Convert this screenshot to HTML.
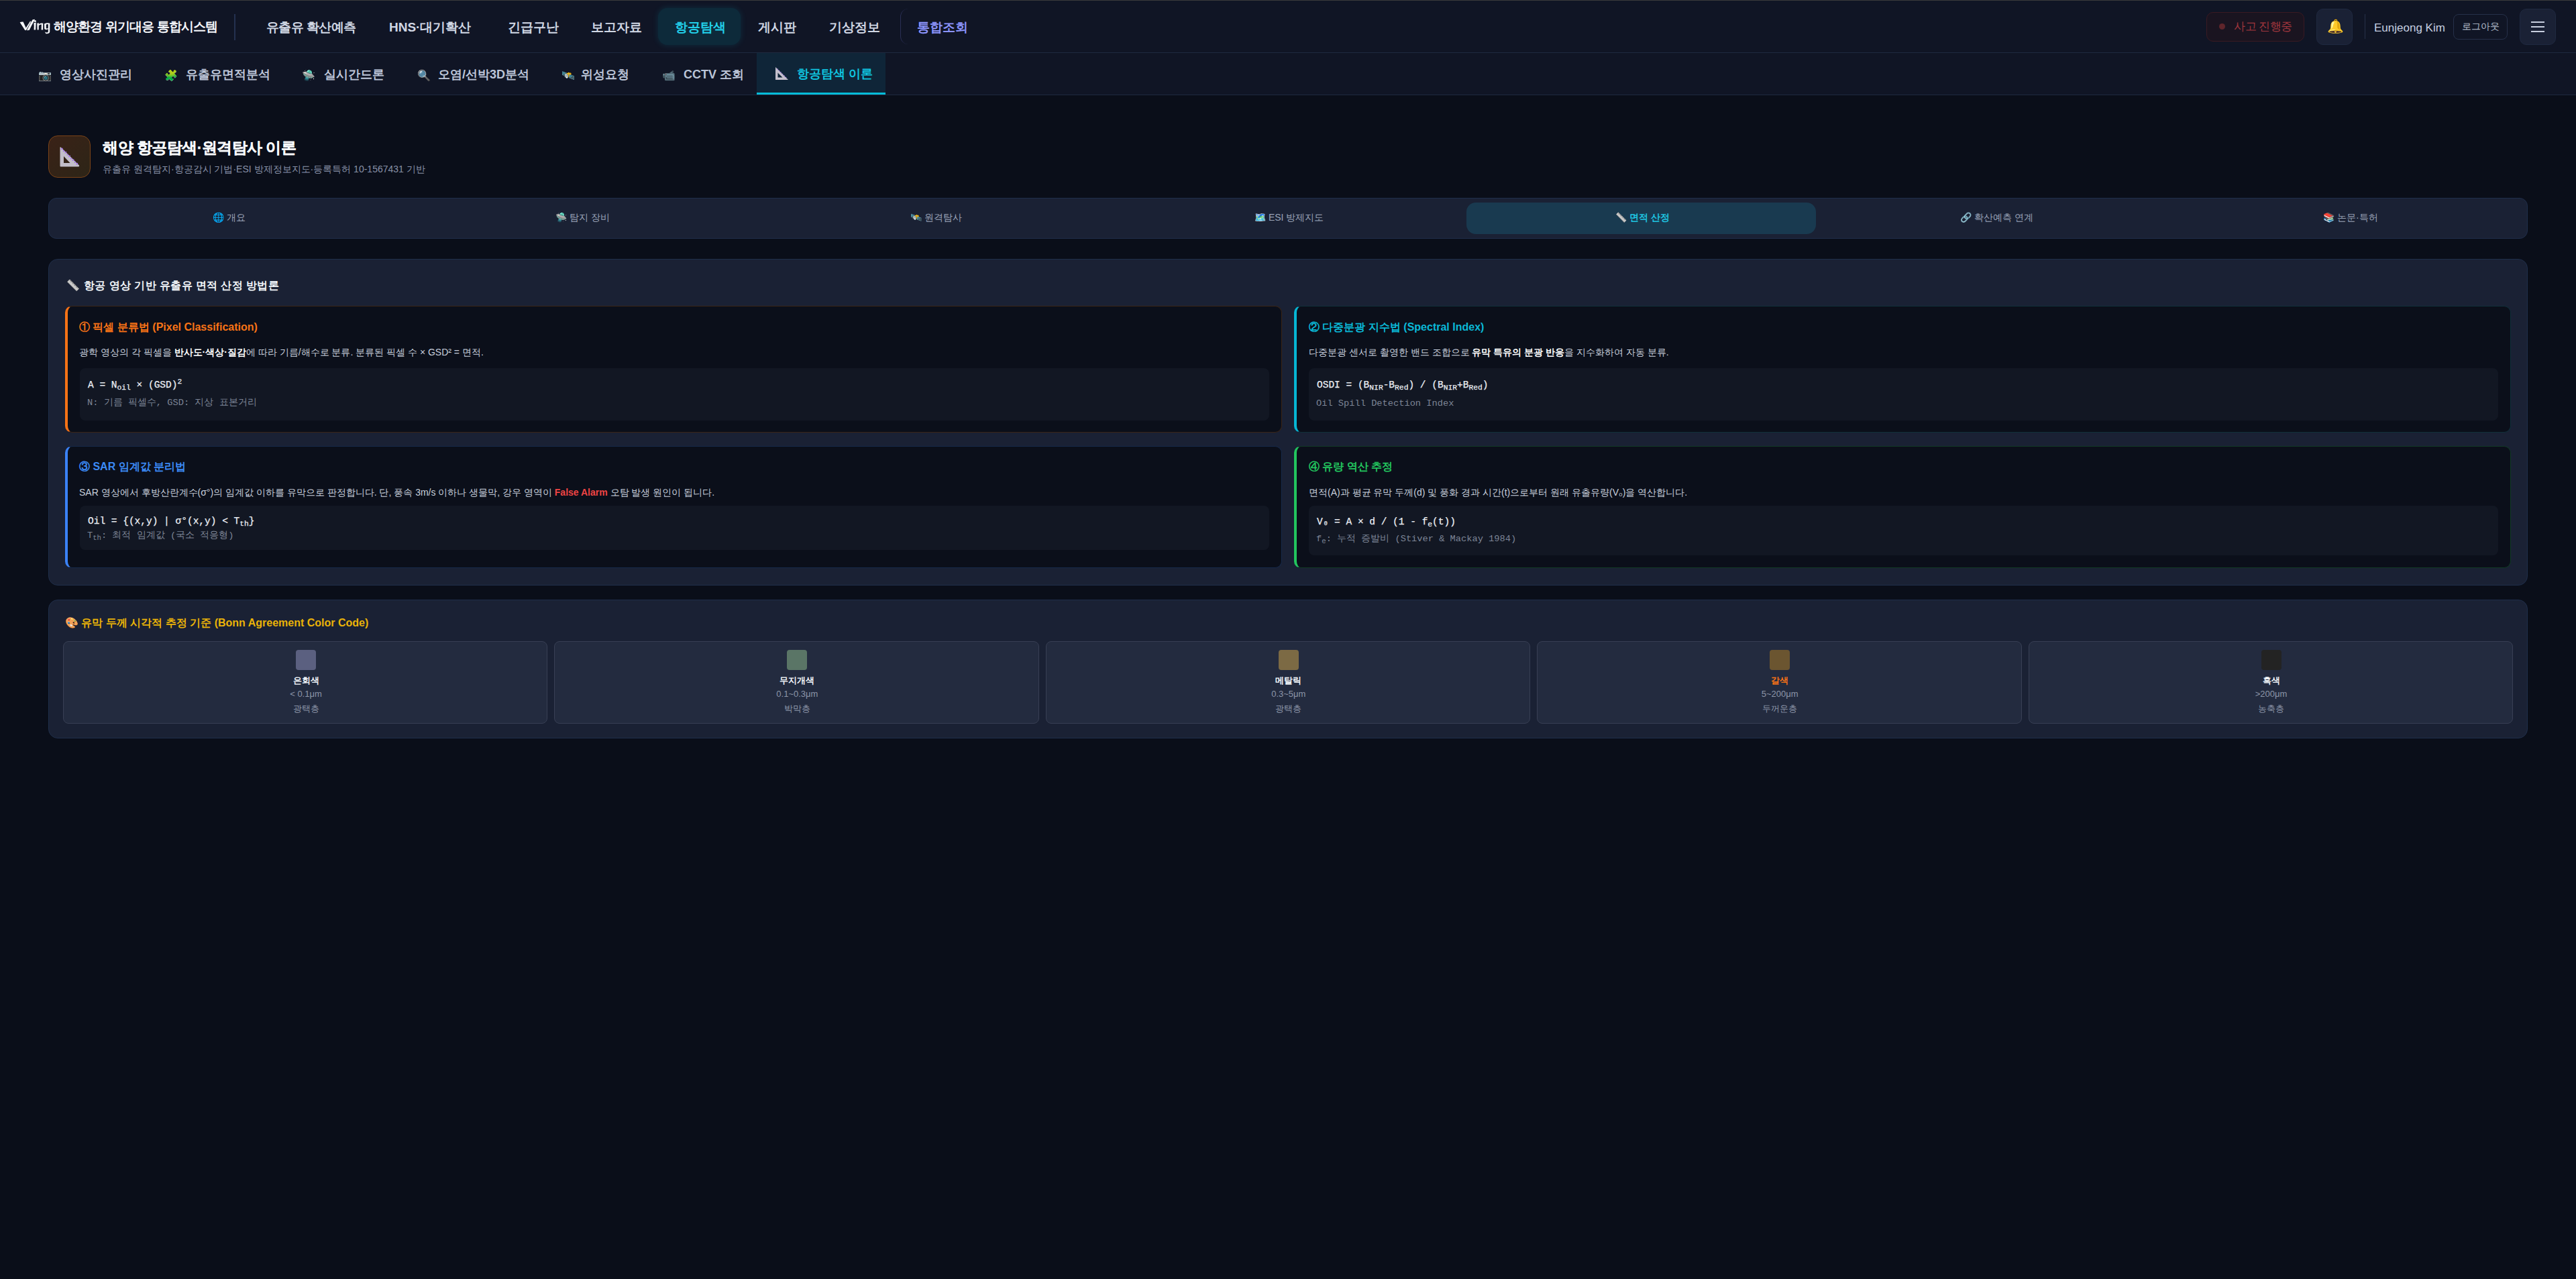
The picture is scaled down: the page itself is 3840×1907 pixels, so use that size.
<!DOCTYPE html>
<html lang="ko"><head><meta charset="utf-8">
<style>
*{box-sizing:border-box;margin:0;padding:0}
html,body{width:3840px;height:1907px;overflow:hidden;background:#0a0e19;font-family:"Liberation Sans",sans-serif;color:#e2e8f0}
.a{position:absolute;white-space:nowrap;line-height:1}
.b{position:absolute}
.topline{position:absolute;left:0;top:0;width:3840px;height:1px;background:#3b3b3b}
.nav{position:absolute;left:0;top:1px;width:3840px;height:78px;background:#101525;border-bottom:1px solid #1e2940}
.sub{position:absolute;left:0;top:79px;width:3840px;height:63px;background:#101525;border-bottom:1px solid #1e2940}
.logo{left:80px;top:29px;font-size:19px;font-weight:700;color:#f4f6fa;letter-spacing:-0.9px}
.vsep{position:absolute;left:349px;top:20px;width:2px;height:39px;background:#243150}
.ni{font-size:19px;font-weight:700;color:#d0d7e4;top:30px}
.act{position:absolute;left:981px;top:11px;width:123px;height:55px;border-radius:14px;background:#0d2a3a;box-shadow:0 0 10px rgba(6,182,212,.16)}
.sbox{position:absolute;left:1342px;top:12px;width:40px;height:53px;border-left:1px solid #2a2f55;border-radius:12px 0 0 12px}
.si{font-size:18px;font-weight:700;color:#bcc5d8;top:23px}
.sic{font-size:16px;top:26px}
.sact{position:absolute;left:1128px;top:0;width:192px;height:62px;background:#0f2538;border-bottom:3px solid #06bcd8}
/* header */
.hicon{position:absolute;left:72px;top:202px;width:63px;height:63px;border-radius:14px;border:1.5px solid #7a4318;background:linear-gradient(135deg,#3a2217,#2d2517)}
.htitle{left:153px;top:210px;font-size:22.5px;font-weight:700;color:#f8fafc;-webkit-text-stroke:.3px #f8fafc;letter-spacing:-.5px}
.hsub{left:153px;top:245px;font-size:14px;color:#8891a7}
/* tabs */
.tabs{position:absolute;left:72px;top:295px;width:3696px;height:61px;border-radius:12px;background:#1a2134;border:1px solid #1f2e4a}
.tab{position:absolute;top:6px;height:47px;width:521px;border-radius:14px}
.tab.on{background:#193a50}
.tt{font-size:14px;color:#9aa4b8;top:317px}
/* panel */
.panel{position:absolute;left:72px;border-radius:14px;background:#1a2134;border:1px solid #1f2e4a}
.ptitle{font-size:16px;font-weight:700;color:#f1f5f9}
.gr{filter:grayscale(1) brightness(.95)}
.card{position:absolute;border-radius:10px;background:#0b0f1a;border:1px solid}
.ch{font-size:16px;font-weight:700}
.cp{font-size:14px;color:#c8cfdd}
.cp b{color:#ffffff}
.code{position:absolute;border-radius:8px;background:#121723}
.mono{font-family:"Liberation Mono",monospace}
.l1{font-size:14.5px;color:#eceff4;-webkit-text-stroke:.25px #eceff4}
sub{font-size:.78em;vertical-align:-.25em;line-height:0}
sup{font-size:.78em;vertical-align:.5em;line-height:0}
.l2{font-size:13.7px;color:#7d8596}
.item{position:absolute;top:956px;width:722.4px;height:123px;border-radius:8px;background:#232b3f;border:1px solid #383f54}
.sw{position:absolute;left:346px;top:12px;width:30px;height:30px;border-radius:4px}
.in{font-size:13px;font-weight:700;color:#f1f5f9;width:722px;text-align:center;left:0;top:51px}
.is{font-size:13px;color:#8d96a9;width:722px;text-align:center;left:0;top:71px}
.id{font-size:13px;color:#8d96a9;width:722px;text-align:center;left:0;top:93px}
</style></head><body>
<div class="topline"></div>
<div class="nav">
  <svg class="b" style="left:24px;top:19px" width="56" height="34" viewBox="24 20 56 34">
    <g fill="#f6f8fb">
      <path d="M29.6 33.2 Q32 32.2 34.6 32.6 L39.6 43.6 L37.4 45.3 Z"/>
      <path d="M36.8 44.6 L45 31.4 L46.3 32.2 L38.8 45.3 Z"/>
      <path d="M39.9 45.3 L43.6 45.1 Q47.5 37 52.2 28.8 L48.6 29.3 Q44 37 39.9 45.3 Z"/>
      <path d="M50.4 34.2 L53.7 33.4 L53.1 44.5 L50.6 44.5 Q51 39 50.4 34.2 Z"/>
      <circle cx="52.4" cy="31.5" r="1.5"/>
      <path d="M55.3 34.8 L57.9 34.3 L57.7 44.5 L55.6 44.5 Z"/>
      <path d="M57.6 36.2 Q60.5 33.6 64.3 34.8 L64.1 44.5 L61.6 44.5 L61.8 36.6 Q59.6 36.2 57.7 38.2 Z"/>
      <path d="M66 35.4 Q70.5 33.2 74.4 34.8 L74.2 47.6 Q73.6 50.8 68.4 50.2 L66.8 47.6 Q70.6 49.6 71.8 47.6 L71.8 43.2 Q67.6 45.2 66.2 43 Z"/>
    </g>
    <path d="M68.8 36.4 L71.8 36.1 L71.8 42.2 L68.8 42.6 Z" fill="#101525"/>
  </svg>
  <div class="a logo">해양환경 위기대응 통합시스템</div>
  <div class="vsep"></div>
  <div class="act"></div>
  <div class="a ni" style="left:397px;letter-spacing:-0.6px">유출유 확산예측</div>
  <div class="a ni" style="left:580px">HNS·대기확산</div>
  <div class="a ni" style="left:757px">긴급구난</div>
  <div class="a ni" style="left:881px">보고자료</div>
  <div class="a ni" style="left:1006px;color:#22d0ea">항공탐색</div>
  <div class="a ni" style="left:1130px">게시판</div>
  <div class="a ni" style="left:1236px">기상정보</div>
  <div class="sbox"></div>
  <div class="a ni" style="left:1367px;color:#8b93fb">통합조회</div>
  <!-- right -->
  <div class="b" style="left:3289px;top:17px;width:146px;height:44px;border-radius:10px;border:1px solid #3a1a22;background:#1a1420"></div>
  <div class="b" style="left:3308px;top:34px;width:9px;height:9px;border-radius:50%;background:#5f252b"></div>
  <div class="a" style="left:3330px;top:30px;font-size:17px;color:#a0363d;letter-spacing:-0.5px">사고 진행중</div>
  <div class="b" style="left:3453px;top:12px;width:54px;height:54px;border-radius:10px;border:1px solid #1f2940;background:#1a2135"></div>
  <div class="a" style="left:3469px;top:28px;font-size:20px">🔔</div>
  <div class="b" style="left:3525px;top:20px;width:1px;height:37px;background:#263049"></div>
  <div class="a" style="left:3539px;top:32px;font-size:17px;color:#c6cfe0">Eunjeong Kim</div>
  <div class="b" style="left:3657px;top:20px;width:81px;height:38px;border-radius:8px;border:1px solid #263049"></div>
  <div class="a" style="left:3670px;top:31px;font-size:14px;color:#b9c1d1">로그아웃</div>
  <div class="b" style="left:3756px;top:12px;width:54px;height:54px;border-radius:10px;border:1px solid #1f2940;background:#1a2135"></div>
  <div class="b" style="left:3773px;top:31px;width:20px;height:2px;background:#c7cede"></div>
  <div class="b" style="left:3773px;top:38px;width:20px;height:2px;background:#c7cede"></div>
  <div class="b" style="left:3773px;top:45px;width:20px;height:2px;background:#c7cede"></div>
</div>
<div class="sub">
  <div class="sact"></div>
  <div class="a sic" style="left:57px">📷</div><div class="a si" style="left:89px">영상사진관리</div>
  <div class="a sic" style="left:245px">🧩</div><div class="a si" style="left:277px">유출유면적분석</div>
  <div class="a sic" style="left:450px">🛸</div><div class="a si" style="left:483px">실시간드론</div>
  <div class="a sic" style="left:622px">🔍</div><div class="a si" style="left:653px">오염/선박3D분석</div>
  <div class="a sic" style="left:837px">🛰️</div><div class="a si" style="left:866px">위성요청</div>
  <div class="a sic" style="left:987px">📹</div><div class="a si" style="left:1019px">CCTV 조회</div>
  <svg class="b" style="left:1155px;top:20px" width="21" height="21" viewBox="0 0 21 21">
    <path d="M1 1 L20 20 L1 20 Z M4.5 9.5 L4.5 16.5 L11.5 16.5 Z" fill="#c4c0cc" fill-rule="evenodd"/>
    <g fill="#a77ef0"><circle cx="4" cy="4" r=".8"/><circle cx="6.5" cy="6.5" r=".8"/><circle cx="9" cy="9" r=".8"/><circle cx="11.5" cy="11.5" r=".8"/><circle cx="14" cy="14" r=".8"/><circle cx="16.5" cy="16.5" r=".8"/></g>
  </svg>
  <div class="a si" style="left:1188px;color:#0fc3df;top:22px">항공탐색 이론</div>
</div>

<!-- header -->
<div class="hicon"></div>
<svg class="b" style="left:88px;top:218px" width="32" height="32" viewBox="0 0 32 32">
  <path d="M1.5 2 Q1.5 0.8 2.6 1.6 L30 28.4 Q30.8 30.5 29 30.5 L2.5 30.5 Q1.5 30.5 1.5 29.5 Z M7 15 L7 25 L16.5 25 Z" fill="#c2bec9" fill-rule="evenodd"/>
  <g stroke="#a36ff0" stroke-width="1.6" stroke-linecap="round">
    <path d="M3.6 4.5 L5 3.4"/><path d="M6.6 7.4 L7.4 6.6"/><path d="M9.2 10 L10.6 8.8"/><path d="M12.2 13 L13 12.2"/><path d="M14.8 15.6 L16.2 14.4"/><path d="M17.8 18.6 L18.6 17.8"/><path d="M20.4 21.2 L21.8 20"/><path d="M23.4 24.2 L24.2 23.4"/><path d="M26 26.8 L27.4 25.6"/>
  </g>
</svg>
<div class="a htitle">해양 항공탐색·원격탐사 이론</div>
<div class="a hsub">유출유 원격탐지·항공감시 기법·ESI 방제정보지도·등록특허 10-1567431 기반</div>

<!-- tabs -->
<div class="tabs">
  <div class="tab on" style="left:2113px"></div>
</div>
<div class="a tt" style="left:317px">🌐 개요</div>
<div class="a tt" style="left:828px">🛸 탐지 장비</div>
<div class="a tt" style="left:1357px">🛰️ 원격탐사</div>
<div class="a tt" style="left:1870px">🗺️ ESI 방제지도</div>
<div class="a tt" style="left:2408px;color:#1ec4e0;font-weight:700"><span class="gr">📏</span> 면적 산정</div>
<div class="a tt" style="left:2922px">🔗 확산예측 연계</div>
<div class="a tt" style="left:3463px">📚 논문·특허</div>

<!-- main panel -->
<div class="panel" style="top:386px;width:3696px;height:487px"></div>
<div class="a ptitle" style="left:99px;top:417px"><span class="gr">📏</span><span style="margin-left:6px;font-size:16.4px;letter-spacing:.35px">항공 영상 기반 유출유 면적 산정 방법론</span></div>

<div class="card" style="left:97px;top:456px;width:1814px;height:189px;border-color:#3a2516;border-left:4px solid #f97316"></div>
<div class="a ch" style="left:118px;top:480px;color:#f97316">① 픽셀 분류법 (Pixel Classification)</div>
<div class="a cp" style="left:118px;top:518px">광학 영상의 각 픽셀을 <b>반사도·색상·질감</b>에 따라 기름/해수로 분류. 분류된 픽셀 수 × GSD² = 면적.</div>
<div class="code" style="left:119px;top:549px;width:1773px;height:78px"></div>
<div class="a mono l1" style="left:131px;top:567px">A = N<sub>oil</sub> × (GSD)<sup>2</sup></div>
<div class="a mono l2" style="left:130px;top:594px">N: 기름 픽셀수, GSD: 지상 표본거리</div>

<div class="card" style="left:1929px;top:456px;width:1814px;height:189px;border-color:#10303a;border-left:4px solid #06b6d4"></div>
<div class="a ch" style="left:1951px;top:480px;color:#0ab8d6">② 다중분광 지수법 (Spectral Index)</div>
<div class="a cp" style="left:1951px;top:518px">다중분광 센서로 촬영한 밴드 조합으로 <b>유막 특유의 분광 반응</b>을 지수화하여 자동 분류.</div>
<div class="code" style="left:1951px;top:549px;width:1773px;height:78px"></div>
<div class="a mono l1" style="left:1963px;top:567px">OSDI = (B<sub>NIR</sub>-B<sub>Red</sub>) / (B<sub>NIR</sub>+B<sub>Red</sub>)</div>
<div class="a mono l2" style="left:1962px;top:595px">Oil Spill Detection Index</div>

<div class="card" style="left:97px;top:665px;width:1814px;height:182px;border-color:#172a4a;border-left:4px solid #3b82f6"></div>
<div class="a ch" style="left:118px;top:688px;color:#3b8af6">③ SAR 임계값 분리법</div>
<div class="a cp" style="left:118px;top:727px">SAR 영상에서 후방산란계수(σ°)의 임계값 이하를 유막으로 판정합니다. 단, 풍속 3m/s 이하나 생물막, 강우 영역이 <b style="color:#ef4444">False Alarm</b> 오탐 발생 원인이 됩니다.</div>
<div class="code" style="left:119px;top:754px;width:1773px;height:66px"></div>
<div class="a mono l1" style="left:131px;top:770px">Oil = {(x,y) | σ°(x,y) &lt; T<sub>th</sub>}</div>
<div class="a mono l2" style="left:130px;top:792px">T<sub>th</sub>: 최적 임계값 (국소 적응형)</div>

<div class="card" style="left:1929px;top:665px;width:1814px;height:182px;border-color:#123a26;border-left:4px solid #22c55e"></div>
<div class="a ch" style="left:1951px;top:688px;color:#22c55e">④ 유량 역산 추정</div>
<div class="a cp" style="left:1951px;top:727px">면적(A)과 평균 유막 두께(d) 및 풍화 경과 시간(t)으로부터 원래 유출유량(V₀)을 역산합니다.</div>
<div class="code" style="left:1951px;top:754px;width:1773px;height:74px"></div>
<div class="a mono l1" style="left:1963px;top:771px">V₀ = A × d / (1 - f<sub>e</sub>(t))</div>
<div class="a mono l2" style="left:1962px;top:797px">f<sub>e</sub>: 누적 증발비 (Stiver &amp; Mackay 1984)</div>

<!-- bonn panel -->
<div class="panel" style="top:894px;width:3696px;height:207px"></div>
<div class="a ptitle" style="left:97px;top:921px;color:#eab308">🎨 유막 두께 시각적 추정 기준 (Bonn Agreement Color Code)</div>
<div class="item" style="left:94px"><div class="sw" style="background:#5b6080"></div><div class="a in">은회색</div><div class="a is">&lt; 0.1μm</div><div class="a id">광택층</div></div>
<div class="item" style="left:826.4px"><div class="sw" style="background:#5a7566"></div><div class="a in">무지개색</div><div class="a is">0.1~0.3μm</div><div class="a id">박막층</div></div>
<div class="item" style="left:1558.8px"><div class="sw" style="background:#7c6a44"></div><div class="a in">메탈릭</div><div class="a is">0.3~5μm</div><div class="a id">광택층</div></div>
<div class="item" style="left:2291.2px"><div class="sw" style="background:#6b5530"></div><div class="a in" style="color:#f97316">갈색</div><div class="a is">5~200μm</div><div class="a id">두꺼운층</div></div>
<div class="item" style="left:3023.6px"><div class="sw" style="background:#232323"></div><div class="a in">흑색</div><div class="a is">&gt;200μm</div><div class="a id">농축층</div></div>
</body></html>
